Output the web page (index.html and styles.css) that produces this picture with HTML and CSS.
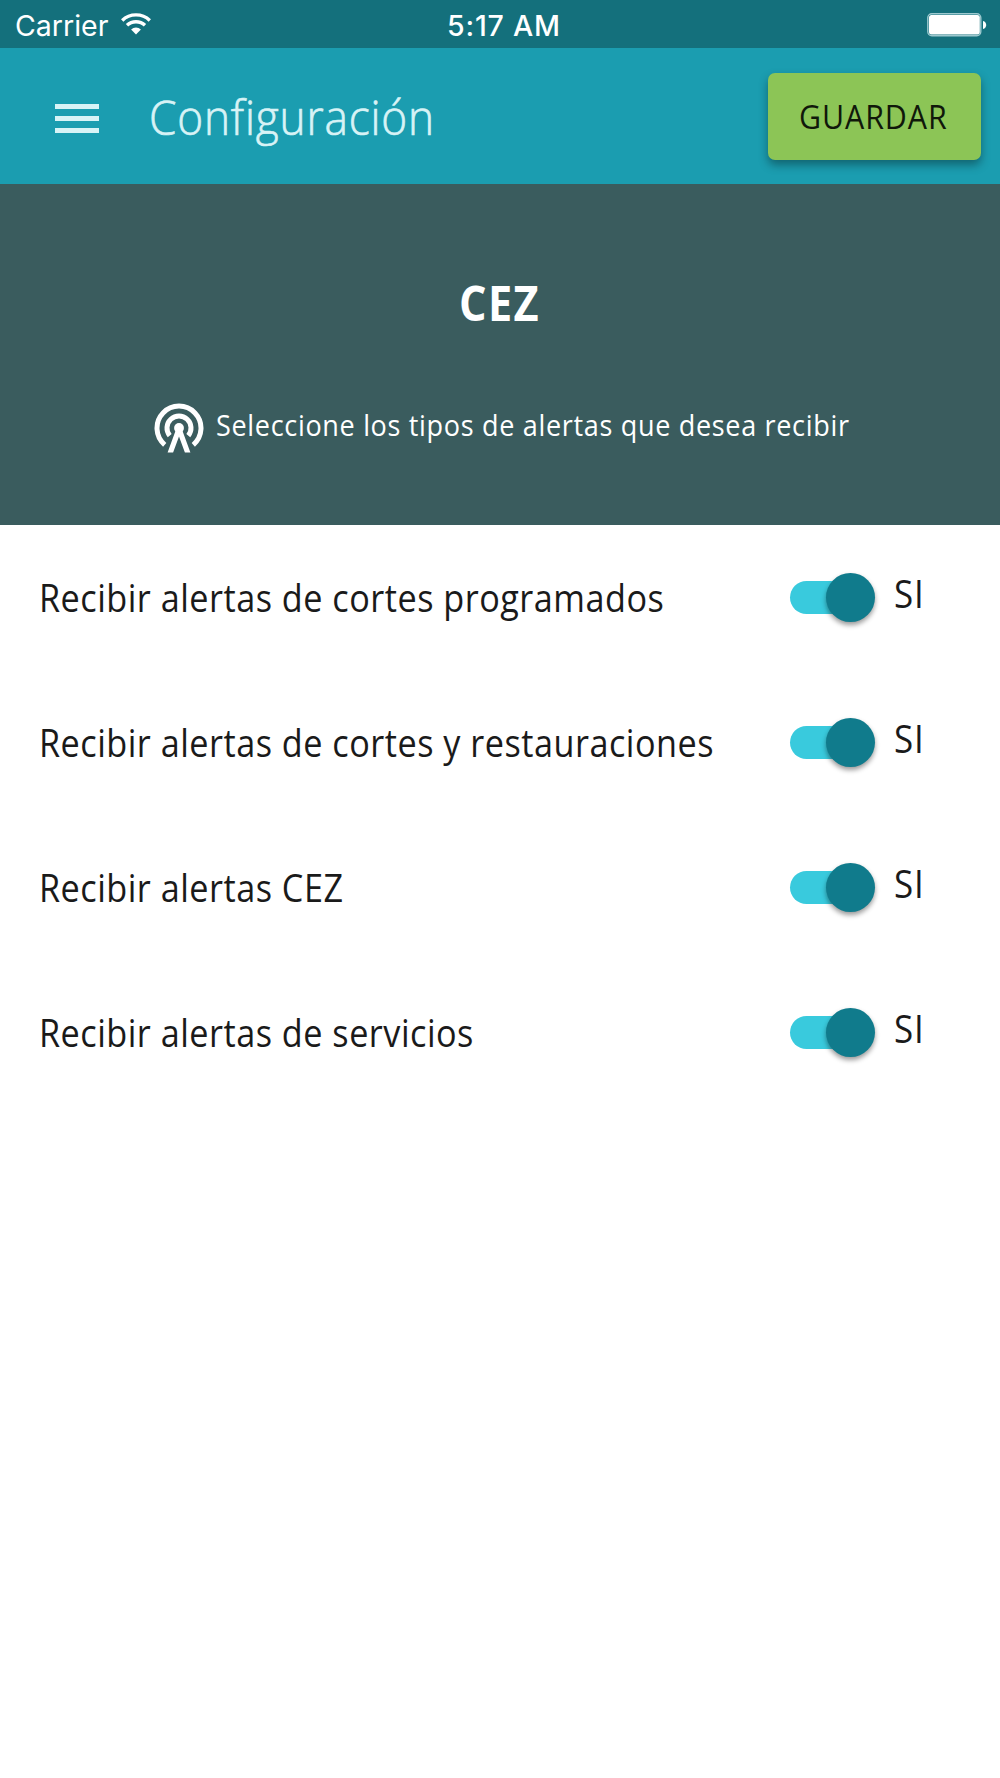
FILE: index.html
```html
<!DOCTYPE html>
<html lang="es">
<head>
<meta charset="utf-8">
<title>Configuración</title>
<link rel="stylesheet" href="styles.css">
</head>
<body>
<div class="status-bar">
  <div class="carrier">
    <span>Carrier</span>
    <svg class="wifi" viewBox="0 0 30 22" width="30" height="22" fill="none" stroke="#fff" stroke-width="3.4">
      <path d="M1.2 7.4a20 20 0 0 1 27.6 0"/>
      <path d="M6 12.3a13 13 0 0 1 18 0"/>
      <path d="M15 21.4l-4.9-5a7.2 7.2 0 0 1 9.8 0z" fill="#fff" stroke="none"/>
    </svg>
  </div>
  <span class="clock">5:17 AM</span>
  <div class="battery">
    <svg viewBox="0 0 60 24" width="60" height="24">
      <rect x=".8" y=".8" width="53" height="22" rx="4" fill="none" stroke="#9dc9cf" stroke-width="1.4"/>
      <rect x="2" y="2" width="50.8" height="19.4" rx="2.5" fill="#fff"/>
      <path d="M56 8c4.300 1 4.300 7 0 8z" fill="#fff"/>
    </svg>
  </div>
</div>
<header class="toolbar">
  <svg class="menu" viewBox="0 0 44 30" width="44" height="30" fill="#d8f3f6">
    <path d="M0 0h44v5H0zM0 12h44v5H0zM0 24h44v5H0z"/>
  </svg>
  <h1 class="title"><span class="narrow">Configuración</span></h1>
  <button class="save"><span class="narrow">GUARDAR</span></button>
</header>
<section class="hero">
  <h2 class="hero-title"><span class="narrow">CEZ</span></h2>
  <p class="hero-text">
    <svg viewBox="-25 -25 50 50" width="50" height="50" fill="none" stroke="#fff">
      <path d="M-14.300 16.800A22 22 0 1 1 14.300 16.800" stroke-width="5"/>
      <path d="M-9.300 7.600A12 12 0 1 1 9.300 7.600" stroke-width="5"/>
      <circle r="4.900" fill="#fff" stroke="none"/>
      <path d="M-2.800 1L-11.400 24.600H-5.900L0 8.500L5.900 24.600H11.400L2.800 1z" fill="#fff" stroke="none"/>
    </svg>
    <span class="narrow">Seleccione los tipos de alertas que desea recibir</span>
  </p>
</section>
<main class="options">
  <div class="option"><div class="label"><span class="narrow">Recibir alertas de cortes programados</span></div><div class="switch"><i class="thumb"></i></div><div class="state"><span class="narrow">SI</span></div></div>
  <div class="option"><div class="label"><span class="narrow">Recibir alertas de cortes y restauraciones</span></div><div class="switch"><i class="thumb"></i></div><div class="state"><span class="narrow">SI</span></div></div>
  <div class="option"><div class="label"><span class="narrow">Recibir alertas CEZ</span></div><div class="switch"><i class="thumb"></i></div><div class="state"><span class="narrow">SI</span></div></div>
  <div class="option"><div class="label"><span class="narrow">Recibir alertas de servicios</span></div><div class="switch"><i class="thumb"></i></div><div class="state"><span class="narrow">SI</span></div></div>
</main>
</body>
</html>
```
FILE: styles.css
```css
* { box-sizing: border-box; }
body {
  margin: 0;
  min-height: 1778px;
  background: #fff;
  color: #1a1a1a;
  font-family: "Open Sans", "Noto Sans", sans-serif;
}
h1, h2, p { margin: 0; font-weight: 400; }
svg { display: block; flex: none; }
.narrow {
  display: inline-block;
  white-space: nowrap;
  transform: scaleX(.9);
  transform-origin: left center;
}
.status-bar {
  display: grid;
  grid-template-columns: 1fr auto 1fr;
  align-items: center;
  height: 48px;
  padding: 3px 13px 0 15px;
  background: #14707c;
  color: #fff;
  font: 400 28.500px/45px Inter, sans-serif;
}
.carrier { display: flex; align-items: center; gap: 12.500px; }
.wifi { margin-top: -3px; }
.clock { font-weight: 500; padding-left: 6px; letter-spacing: .800px; }
.battery { display: flex; justify-content: flex-end; margin-top: -1px; }
.toolbar {
  display: flex;
  align-items: center;
  height: 136px;
  padding: 0 19px 0 55px;
  background: #1b9db0;
}
.menu { margin: 5px 0 0; }
.title {
  flex: 1;
  margin: 1px 0 0 50px;
  color: #d8f3f6;
  font-size: 48px;
  line-height: 64px;
  font-weight: 300;
  letter-spacing: .900px;
  -webkit-text-stroke: .7px #d8f3f6;
}
.title .narrow { transform: scaleX(.92); }
.save {
  width: 213px;
  height: 87px;
  padding: 0 0 0 31px;
  border: 0;
  border-radius: 7px;
  background: #8cc556;
  box-shadow: 0 5px 10px rgba(0, 0, 0, .36);
  color: #10180a;
  font: inherit;
  font-size: 33px;
  text-align: left;
  letter-spacing: 1px;
}
.save .narrow { transform: scaleX(.92); }
.hero {
  height: 341px;
  padding-top: 86px;
  background: #3a5c5e;
  color: #fff;
}
.hero-title {
  font-size: 48px;
  line-height: 66px;
  font-weight: 700;
  letter-spacing: 1.500px;
  padding-left: 458.500px;
}
.hero-title .narrow { transform: scaleX(.9); }
.hero-text {
  display: flex;
  align-items: center;
  margin-top: 66px;
  padding-left: 154px;
  font-size: 30px;
  line-height: 46px;
}
.hero-text .narrow { margin: 0 0 5px 12px; letter-spacing: .760px; }
.options { display: flex; flex-direction: column; }
.option {
  display: flex;
  align-items: center;
  height: 145px;
  padding: 0 0 1px 39px;
  font-size: 38px;
  line-height: 52px;
}
.label { width: 751px; letter-spacing: .550px; }
.switch {
  display: flex;
  align-items: center;
  justify-content: flex-end;
  width: 84px;
  height: 33px;
  border-radius: 17px;
  background: #39cadd;
}
.thumb {
  width: 49px;
  height: 49px;
  margin-right: -.5px;
  flex: none;
  border-radius: 50%;
  background: #107b8c;
  box-shadow: 0 3px 5px rgba(0, 0, 0, .4);
}
.state { margin-left: 20px; margin-top: -8px; letter-spacing: 1px; }
.state .narrow { transform: scaleX(.92); }
```
